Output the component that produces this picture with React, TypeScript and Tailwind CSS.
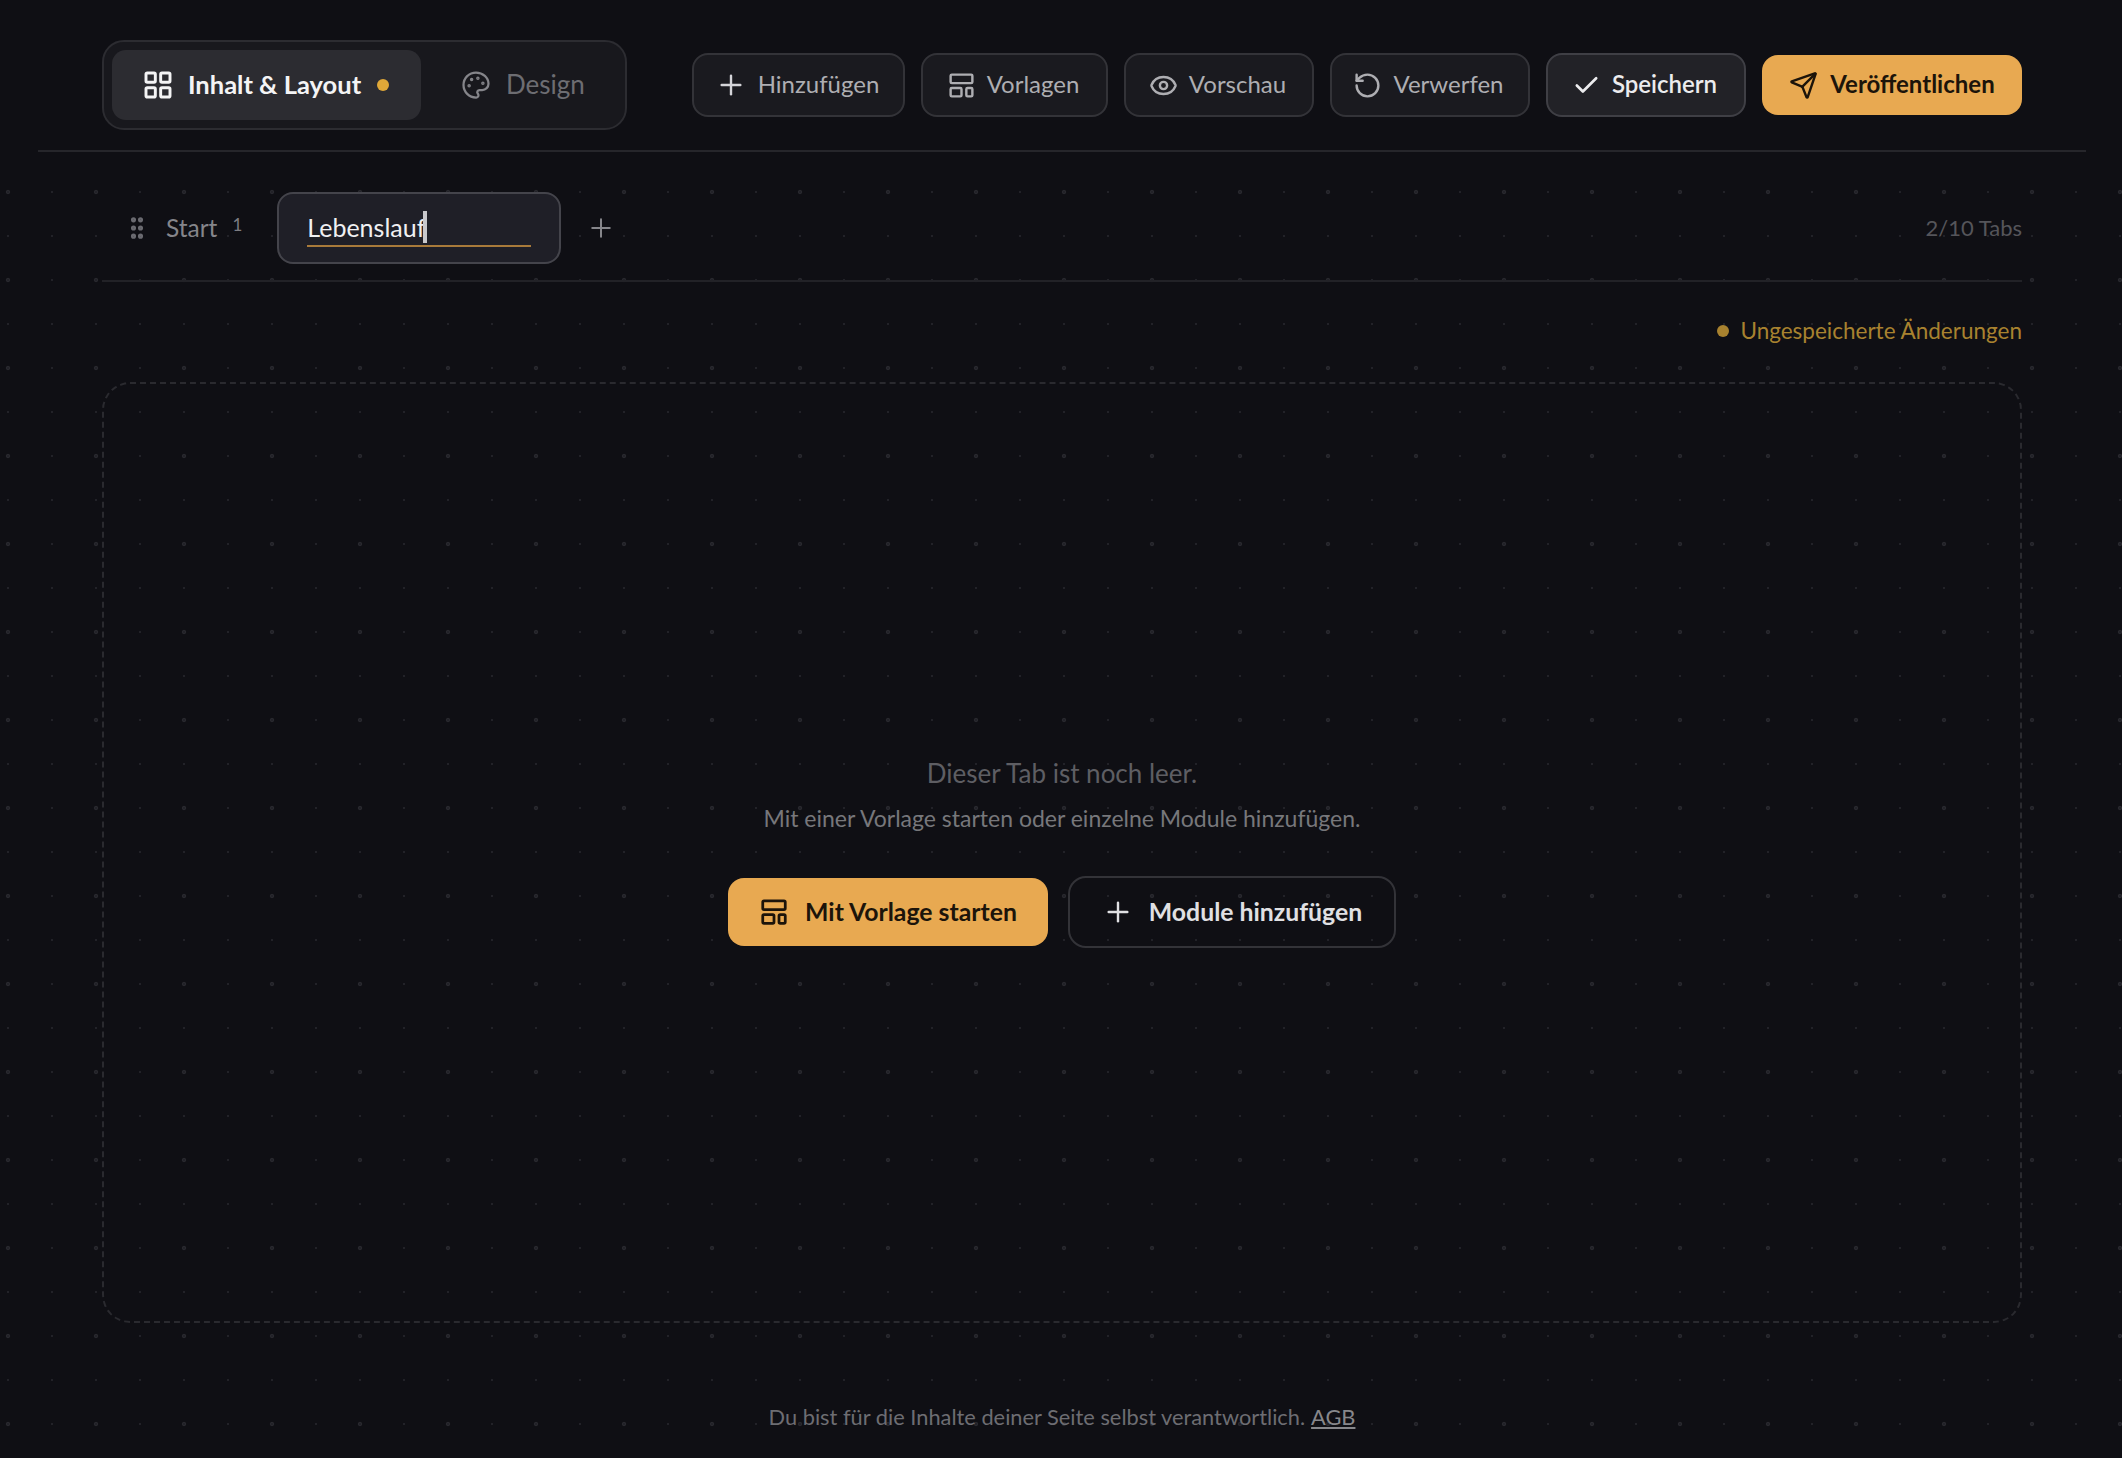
import { Check, Eye, GripVertical, LayoutGrid, LayoutTemplate, Palette, Plus, RotateCcw, Send } from "lucide-react"

const ToolbarButton = ({ icon, label, width, strong }: { icon: React.ReactNode, label: string, width: string, strong?: boolean }) => (
    <button className={`${width} h-16 flex items-center justify-center gap-[11px] rounded-[16px] border-2 pr-[3px] text-[24px] ${strong ? "border-[#3f3f45] bg-[#222227] text-[#ececee] font-semibold" : "border-[#333338] bg-[#1a1a1f] text-[#aeaeb2]"}`}>
        {icon}
        <span className="-translate-y-[1px]">{label}</span>
    </button>
)

const App = () => {
    return (
        <div className="relative h-[1458px] w-full overflow-hidden bg-[#0f0f14] [font-family:Lato,sans-serif]">
            {/* dot pattern, header sits above it */}
            <div className="absolute inset-x-0 bottom-0 top-[152px] bg-[radial-gradient(circle,#222228_1px,transparent_1.5px),radial-gradient(circle,#28282e_1.6px,transparent_2.6px)] bg-[size:44px_44px,88px_88px] bg-[position:-14px_18px,-36px_-4px]" />

            <div className="relative flex h-full flex-col">
                <header className="ml-[38px] mr-[36px] flex h-[152px] shrink-0 items-start border-b-2 border-[#26262b] bg-[#0f0f14] pl-[64px] pr-[64px] pt-[40px]">
                    <div className="flex h-[90px] w-[525px] items-center gap-[12px] rounded-[22px] border-2 border-[#2c2c31] bg-[#18181d] pl-[8px]">
                        <div className="flex h-[70px] w-[309px] items-center rounded-[14px] bg-[#2c2c31] pl-[30px] text-[25.5px] font-bold text-[#f4f4f5]">
                            <LayoutGrid size={32} strokeWidth={2.2} />
                            <span className="ml-[14px] -translate-y-[1px]">Inhalt &amp; Layout</span>
                            <span className="ml-[16px] h-3 w-3 rounded-full bg-[#e0a838]" />
                        </div>
                        <div className="flex items-center pl-[28px] text-[26px] text-[#6d6d72]">
                            <Palette size={30} strokeWidth={1.8} className="text-[#85858a]" />
                            <span className="ml-[15px] -translate-y-[1px]">Design</span>
                        </div>
                    </div>
                    <div className="ml-auto flex items-center gap-[16px] pt-[13px]">
                        <ToolbarButton width="w-[213px]" label="Hinzufügen" icon={<Plus size={32} strokeWidth={1.8} className="text-[#d4d4d8]" />} />
                        <ToolbarButton width="w-[187px]" label="Vorlagen" icon={<LayoutTemplate size={29} strokeWidth={2} />} />
                        <ToolbarButton width="w-[190px]" label="Vorschau" icon={<Eye size={29} strokeWidth={2} />} />
                        <ToolbarButton width="w-[200px]" label="Verwerfen" icon={<RotateCcw size={29} strokeWidth={2} />} />
                        <ToolbarButton width="w-[200px]" strong label="Speichern" icon={<Check size={29} strokeWidth={2.2} />} />
                        <button className="flex h-[60px] w-[260px] items-center justify-center gap-[12px] rounded-[16px] bg-[#e8a951] text-[24px] font-bold text-[#1c140a]">
                            <Send size={29} strokeWidth={2} />
                            <span className="-translate-y-[1px]">Veröffentlichen</span>
                        </button>
                    </div>
                </header>

                <main className="flex flex-1 flex-col pl-[102px] pr-[100px]">
                    <div className="flex h-[130px] shrink-0 items-center border-b-2 border-[#222227] pt-[24px]">
                        <GripVertical size={28} strokeWidth={2.4} className="ml-[21px] text-[#6a6a70]" />
                        <span className="ml-[15px] text-[24.5px] text-[#85858a]">Start</span>
                        <span className="ml-[15px] -mt-[4px] self-center text-[17px] leading-none text-[#7d7d82] -translate-y-[2px]">1</span>
                        <div className="ml-[35px] flex h-[72px] w-[284px] flex-col justify-center rounded-[16px] border-2 border-[#44444b] bg-[#1f1f27] px-[28px]">
                            <div className="flex h-[38px] items-center border-b-2 border-[#a87a3a] text-[25px] leading-none text-[#f0f0f2]">
                                <span>Lebenslauf</span>
                                <span className="-ml-[2px] h-[32px] w-[4px] bg-[#c8c8cc]" />
                            </div>
                        </div>
                        <Plus size={30} strokeWidth={1.6} className="ml-[25px] text-[#86868b]" />
                        <span className="ml-auto -translate-y-[1px] text-[22px] text-[#55555a]">2/10 Tabs</span>
                    </div>

                    <div className="flex h-[100px] shrink-0 items-center justify-end gap-[11px] pb-[2px] text-[22.5px] text-[#a8822f]">
                        <span className="h-3 w-3 rounded-full bg-[#a8822f]" />
                        <span>Ungespeicherte Änderungen</span>
                    </div>

                    <div className="flex h-[941px] shrink-0 flex-col items-center justify-center rounded-[28px] border-2 border-dashed border-[#2a2a2f] pb-[3px]">
                        <p className="text-[26px] leading-[36px] text-[#5e5e63]">Dieser Tab ist noch leer.</p>
                        <p className="mt-[9px] text-[23px] leading-[36px] text-[#77777b]">Mit einer Vorlage starten oder einzelne Module hinzufügen.</p>
                        <div className="mt-[40px] flex items-center gap-[20px]">
                            <button className="flex h-[68px] w-[320px] items-center justify-center gap-[16px] rounded-[16px] bg-[#e8a951] text-[24.8px] font-bold text-[#1c140a]">
                                <LayoutTemplate size={30} strokeWidth={2.2} />
                                <span>Mit Vorlage starten</span>
                            </button>
                            <button className="flex h-[72px] w-[328px] items-center justify-center gap-[15px] rounded-[18px] border-2 border-[#333338] text-[24.8px] font-bold text-[#e0e0e3]">
                                <Plus size={32} strokeWidth={1.8} />
                                <span>Module hinzufügen</span>
                            </button>
                        </div>
                    </div>

                    <footer className="flex flex-1 items-center justify-center pt-[53px] text-[21.8px] text-[#6d6d72]">
                        <span>Du bist für die Inhalte deiner Seite selbst verantwortlich.</span>
                        <a className="ml-[6px] text-[#87878b] underline">AGB</a>
                    </footer>
                </main>
            </div>
        </div>
    )
}

export default App
